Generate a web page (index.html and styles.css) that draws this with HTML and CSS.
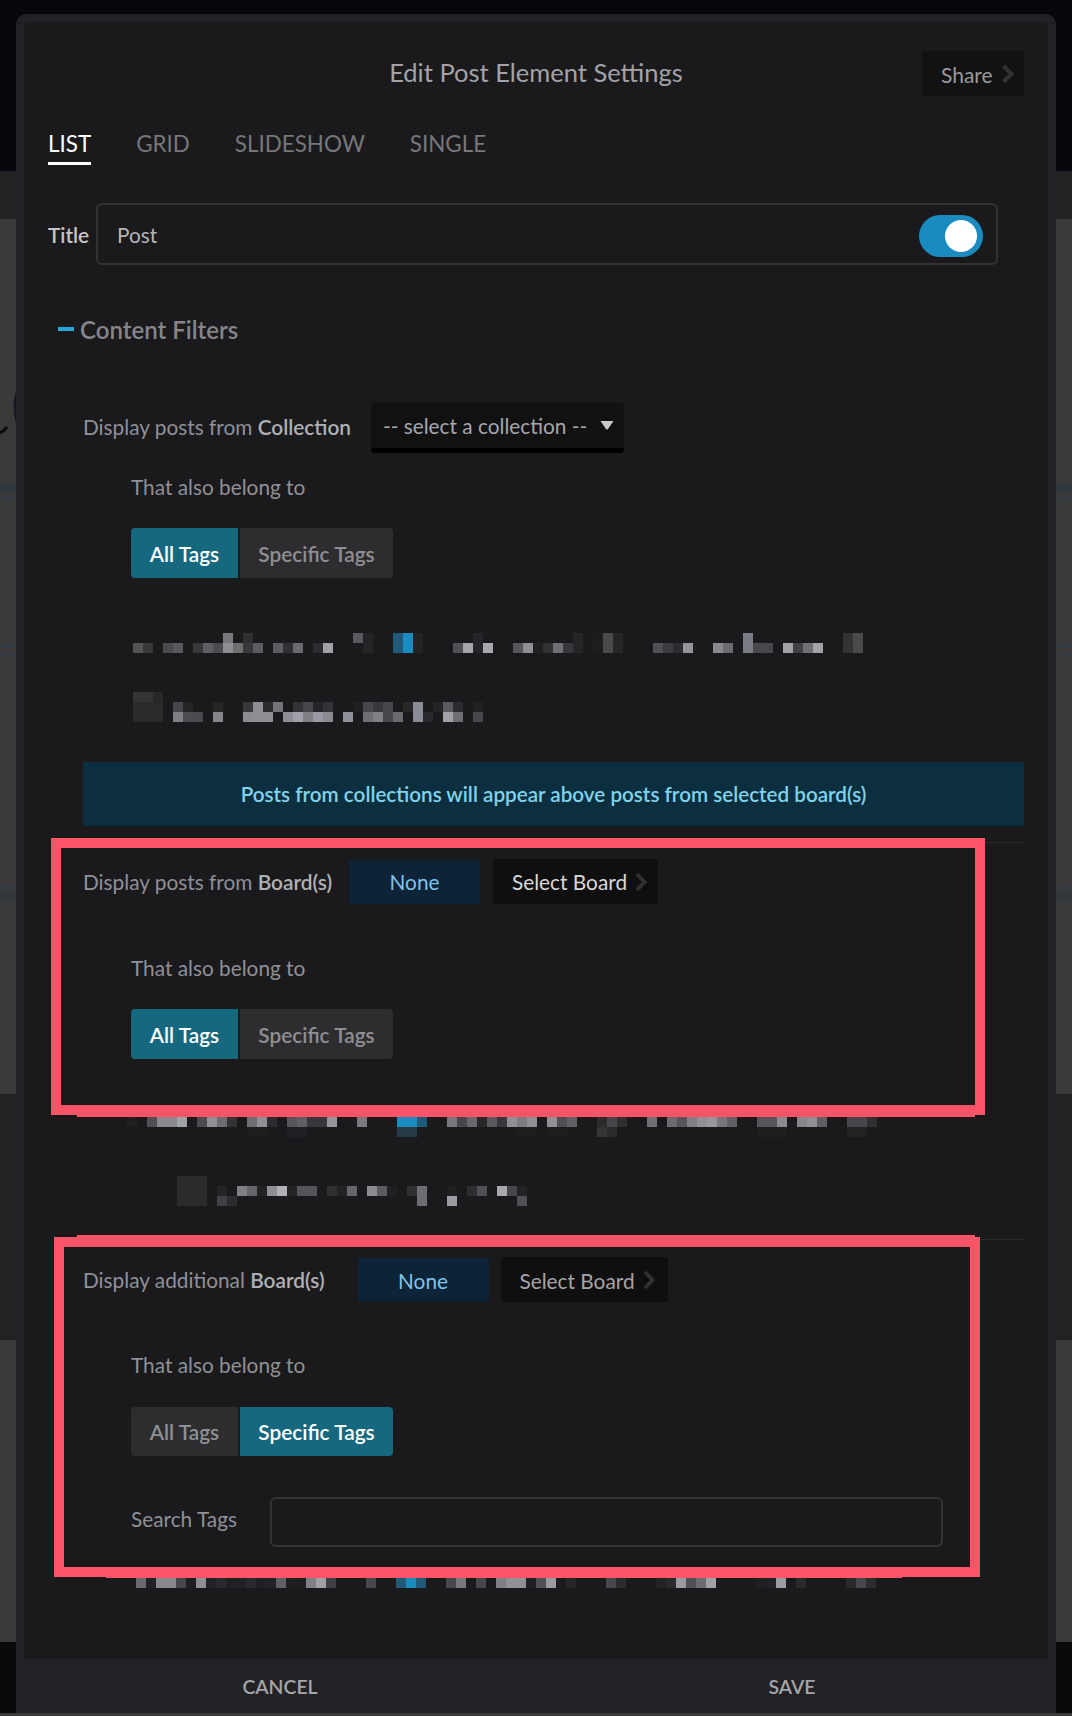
FILE: index.html
```html
<!DOCTYPE html>
<html lang="en">
<head>
<meta charset="utf-8">
<title>Edit Post Element Settings</title>
<link rel="stylesheet" href="styles.css">
</head>
<body>
<div class="backdrop">
  <div class="band band-top"></div>
  <div class="band band-mid"></div>
  <div class="band band-grey band-a">
    <i class="stripe stripe-1"></i><i class="dots dots-1"></i><i class="dots dots-2"></i><i class="dots dots-3"></i><i class="dots dots-4"></i><i class="stripe stripe-2"></i>
    <svg class="glyph" width="18" height="60" viewBox="0 0 18 60"><path d="M0 46 Q4 44 7 40" fill="none" stroke="#0c0c10" stroke-width="3"/><path d="M17 6 Q13 18 17 35" fill="none" stroke="#14181f" stroke-width="3"/></svg>
  </div>
  <div class="band band-mid band-b"></div>
  <div class="band band-grey band-c"></div>
  <div class="band band-black"></div>
  <div class="band band-grey band-d"></div>
</div>

<div class="modal">
  <div class="panel">
    <header class="head">
      <span></span>
      <h1 class="title">Edit Post Element Settings</h1>
      <button class="share">Share
        <svg class="chev" width="14" height="20" viewBox="0 0 14 20"><path d="M2.5 2 L10.5 10 L2.5 18" fill="none" stroke="#303032" stroke-width="4.2"/></svg>
      </button>
    </header>

    <nav class="tabs">
      <a class="tab tab-on">LIST</a><a class="tab">GRID</a><a class="tab">SLIDESHOW</a><a class="tab">SINGLE</a>
    </nav>

    <div class="title-row">
      <label class="title-label">Title</label>
      <div class="title-input">
        <span>Post</span>
        <span class="toggle"><i class="knob"></i></span>
      </div>
    </div>

    <h2 class="filters"><i class="dash"></i>Content Filters</h2>

    <div class="row row-collection">
      <span class="lbl lbl-raised">Display posts from <b>Collection</b></span>
      <div class="select">-- select a collection --
        <svg class="tri" width="14" height="9" viewBox="0 0 14 9"><path d="M0.5 0 H13.5 L8 8 Q7 9 6 8 Z" fill="#c9c9cb"/></svg>
      </div>
    </div>
    <p class="also also-first">That also belong to</p>
    <div class="seg"><span class="seg-btn seg-a seg-on">All Tags</span><span class="seg-btn seg-b">Specific Tags</span></div>

    <svg class="mosaic m1" width="750" height="20" viewBox="0 0 75 2" shape-rendering="crispEdges">
      <g transform="translate(0 1)"><rect x="0" fill="#555"/><rect x="1" fill="#3a3a3c"/><rect x="3" fill="#4a4a4d"/><rect x="4" fill="#58585c"/><rect x="6" fill="#38383b"/><rect x="7" fill="#5f5f63"/><rect x="8" fill="#4c4c50"/><rect x="9" fill="#8f8f93"/><rect x="10" fill="#6e6e70"/><rect x="11" fill="#38383b"/><rect x="12" fill="#5c5c60"/><rect x="14" fill="#5c5e62"/><rect x="15" fill="#303034"/><rect x="16" fill="#6a6a6e"/><rect x="18" fill="#2c2c30"/><rect x="19" fill="#a0a0a6"/><rect x="23" fill="#242427"/><rect x="26" fill="#205a78"/><rect x="27" fill="#1a8bbf"/><rect x="28" fill="#232326"/><rect x="32" fill="#505055"/><rect x="33" fill="#a5a5ac"/><rect x="34" fill="#26262a"/><rect x="35" fill="#a8a8ae"/><rect x="38" fill="#55555a"/><rect x="39" fill="#909094"/><rect x="40" fill="#202022"/><rect x="41" fill="#333335"/><rect x="42" fill="#6e7074"/><rect x="43" fill="#38383c"/><rect x="44" fill="#252527"/><rect x="46" fill="#1e1e20"/><rect x="47" fill="#4a4a4a"/><rect x="48" fill="#262628"/><rect x="52" fill="#505055"/><rect x="53" fill="#3c3c40"/><rect x="54" fill="#2b2c30"/><rect x="55" fill="#959599"/><rect x="58" fill="#8a8a8e"/><rect x="59" fill="#6c6c70"/><rect x="61" fill="#7a7c84"/><rect x="62" fill="#48484c"/><rect x="63" fill="#48484c"/><rect x="65" fill="#a0a0a6"/><rect x="66" fill="#404045"/><rect x="67" fill="#6f6f74"/><rect x="68" fill="#a0a3a8"/><rect x="71" fill="#333"/><rect x="72" fill="#4a4a4a"/></g>
      <g><rect x="9" fill="#77777c"/><rect x="11" fill="#303033"/><rect x="22" fill="#5a5a5e"/><rect x="23" fill="#242427"/><rect x="26" fill="#205a78"/><rect x="27" fill="#1a8bbf"/><rect x="28" fill="#232326"/><rect x="34" fill="#26262a"/><rect x="44" fill="#252527"/><rect x="46" fill="#1e1e20"/><rect x="47" fill="#4a4a4a"/><rect x="48" fill="#262628"/><rect x="61" fill="#7a7c84"/><rect x="71" fill="#333"/><rect x="72" fill="#4a4a4a"/></g>
    </svg>

    <svg class="mosaic m2" width="350" height="30" viewBox="0 0 35 3" shape-rendering="crispEdges">
      <g><rect x="0" fill="#343437"/><rect x="1" fill="#343437"/><rect x="2" fill="#28282b"/></g>
      <g transform="translate(0 1)"><rect x="0" fill="#2b2b2e"/><rect x="1" fill="#2b2b2e"/><rect x="2" fill="#2b2b2e"/><rect x="4" fill="#47474b"/><rect x="5" fill="#252527"/><rect x="8" fill="#252527"/><rect x="11" fill="#38383b"/><rect x="12" fill="#8f8f93"/><rect x="13" fill="#2c2c2f"/><rect x="14" fill="#727478"/><rect x="16" fill="#333336"/><rect x="17" fill="#47474b"/><rect x="18" fill="#242427"/><rect x="19" fill="#333338"/><rect x="22" fill="#202022"/><rect x="23" fill="#47474b"/><rect x="24" fill="#38383c"/><rect x="25" fill="#47474b"/><rect x="27" fill="#28282b"/><rect x="28" fill="#8a8c94"/><rect x="30" fill="#242427"/><rect x="31" fill="#5a5a5e"/><rect x="32" fill="#2c2c30"/><rect x="34" fill="#212123"/></g>
      <g transform="translate(0 2)"><rect x="0" fill="#2b2b2e"/><rect x="1" fill="#2b2b2e"/><rect x="2" fill="#2b2b2e"/><rect x="4" fill="#808084"/><rect x="5" fill="#4c4c50"/><rect x="6" fill="#4a4a4e"/><rect x="8" fill="#85858a"/><rect x="11" fill="#8c8c90"/><rect x="12" fill="#8f8f93"/><rect x="13" fill="#8f8f93"/><rect x="15" fill="#8e8e94"/><rect x="16" fill="#a0a0a8"/><rect x="17" fill="#808084"/><rect x="18" fill="#9a9aa2"/><rect x="19" fill="#8a8a90"/><rect x="21" fill="#8f9298"/><rect x="23" fill="#6f6f75"/><rect x="24" fill="#808086"/><rect x="25" fill="#47474b"/><rect x="26" fill="#6a6a6e"/><rect x="28" fill="#8a8c94"/><rect x="29" fill="#28282c"/><rect x="31" fill="#a0a0a8"/><rect x="32" fill="#6e6e72"/><rect x="34" fill="#47474b"/></g>
    </svg>

    <div class="notice">Posts from collections will appear above posts from selected board(s)</div>

    <hr class="rule rule-1">
    <div class="row row-boards">
      <span class="lbl">Display posts from <b>Board(s)</b></span>
      <span class="none none-1">None</span>
      <button class="pick pick-1">Select Board
        <svg class="chev" width="12" height="20" viewBox="0 0 12 20"><path d="M2 2 L9.5 10 L2 18" fill="none" stroke="#303032" stroke-width="4"/></svg>
      </button>
    </div>
    <p class="also also-board">That also belong to</p>
    <div class="seg"><span class="seg-btn seg-a seg-on">All Tags</span><span class="seg-btn seg-b">Specific Tags</span></div>

    <svg class="mosaic m3" width="750" height="20" viewBox="0 0 75 2" shape-rendering="crispEdges">
      <g><rect x="0" fill="#202022"/><rect x="2" fill="#505054"/><rect x="3" fill="#8a8a8e"/><rect x="4" fill="#8a8a8e"/><rect x="5" fill="#a0a3a8"/><rect x="7" fill="#4c4c50"/><rect x="8" fill="#8f9096"/><rect x="9" fill="#6e6e72"/><rect x="10" fill="#333336"/><rect x="12" fill="#6c6e72"/><rect x="13" fill="#8f9096"/><rect x="14" fill="#2c2c30"/><rect x="16" fill="#55555a"/><rect x="17" fill="#5f6064"/><rect x="18" fill="#38383c"/><rect x="19" fill="#38383c"/><rect x="20" fill="#95969c"/><rect x="23" fill="#7a7a7e"/><rect x="27" fill="#1a8bbf"/><rect x="28" fill="#1a8bbf"/><rect x="29" fill="#205a78"/><rect x="32" fill="#77777c"/><rect x="33" fill="#47474b"/><rect x="34" fill="#68686c"/><rect x="35" fill="#28282b"/><rect x="36" fill="#5a5a5e"/><rect x="37" fill="#38383c"/><rect x="38" fill="#8f9096"/><rect x="39" fill="#7c7c80"/><rect x="40" fill="#8f9096"/><rect x="42" fill="#909094"/><rect x="43" fill="#505054"/><rect x="44" fill="#5f6064"/><rect x="47" fill="#2c2c2e"/><rect x="48" fill="#47474b"/><rect x="49" fill="#303033"/><rect x="52" fill="#6e7076"/><rect x="54" fill="#6c6c70"/><rect x="55" fill="#555559"/><rect x="56" fill="#808084"/><rect x="57" fill="#909094"/><rect x="58" fill="#97979d"/><rect x="59" fill="#77777c"/><rect x="60" fill="#606064"/><rect x="63" fill="#55555a"/><rect x="64" fill="#55555a"/><rect x="65" fill="#8a8c92"/><rect x="67" fill="#85858a"/><rect x="68" fill="#8f9096"/><rect x="69" fill="#606064"/><rect x="72" fill="#47474b"/><rect x="73" fill="#47474b"/><rect x="74" fill="#303033"/></g>
      <g transform="translate(0 1)"><rect x="12" fill="#1e1e20"/><rect x="13" fill="#1e1e20"/><rect x="16" fill="#1f1f24"/><rect x="17" fill="#1f1f24"/><rect x="27" fill="#263a48"/><rect x="28" fill="#263a48"/><rect x="39" fill="#1e1e20"/><rect x="40" fill="#1e1e20"/><rect x="42" fill="#1e1e20"/><rect x="43" fill="#1e1e20"/><rect x="47" fill="#363638"/><rect x="48" fill="#2a2a2c"/><rect x="63" fill="#1f1f22"/><rect x="64" fill="#1f1f22"/><rect x="65" fill="#1f1f22"/><rect x="72" fill="#222224"/><rect x="73" fill="#222224"/></g>
    </svg>

    <svg class="mosaic m4" width="350" height="30" viewBox="0 0 35 3" shape-rendering="crispEdges">
      <g><rect x="0" fill="#2b2b2e"/><rect x="1" fill="#2b2b2e"/><rect x="2" fill="#2b2b2e"/></g>
      <g transform="translate(0 1)"><rect x="0" fill="#2b2b2e"/><rect x="1" fill="#2b2b2e"/><rect x="2" fill="#2b2b2e"/><rect x="4" fill="#242427"/><rect x="6" fill="#808084"/><rect x="7" fill="#66666a"/><rect x="8" fill="#232326"/><rect x="9" fill="#909094"/><rect x="10" fill="#b0b2b8"/><rect x="11" fill="#232326"/><rect x="12" fill="#555559"/><rect x="13" fill="#555559"/><rect x="15" fill="#303033"/><rect x="16" fill="#232326"/><rect x="17" fill="#66666a"/><rect x="19" fill="#8a8c92"/><rect x="20" fill="#5c5c60"/><rect x="21" fill="#202022"/><rect x="23" fill="#303033"/><rect x="24" fill="#6e6e72"/><rect x="27" fill="#1f1f21"/><rect x="29" fill="#2e2e30"/><rect x="30" fill="#505054"/><rect x="32" fill="#a8a8ae"/><rect x="33" fill="#47474b"/><rect x="34" fill="#232326"/></g>
      <g transform="translate(0 2)"><rect x="0" fill="#2b2b2e"/><rect x="1" fill="#2b2b2e"/><rect x="2" fill="#2b2b2e"/><rect x="4" fill="#404044"/><rect x="5" fill="#2c2c2f"/><rect x="24" fill="#6e6e72"/><rect x="27" fill="#9a9aa2"/><rect x="34" fill="#505054"/></g>
    </svg>

    <hr class="rule rule-2">
    <div class="row row-boards row-add">
      <span class="lbl lbl-add">Display additional <b>Board(s)</b></span>
      <span class="none none-2">None</span>
      <button class="pick pick-2">Select Board
        <svg class="chev" width="12" height="20" viewBox="0 0 12 20"><path d="M2 2 L9.5 10 L2 18" fill="none" stroke="#303032" stroke-width="4"/></svg>
      </button>
    </div>
    <p class="also also-board">That also belong to</p>
    <div class="seg seg-short"><span class="seg-btn seg-a">All Tags</span><span class="seg-btn seg-b seg-on">Specific Tags</span></div>
    <div class="search">
      <label class="lbl search-label">Search Tags</label>
      <div class="search-input"></div>
    </div>

    <svg class="mosaic m5" width="750" height="10" viewBox="0 0 75 1" shape-rendering="crispEdges">
      <rect x="0" fill="#6a6a6e"/><rect x="1" fill="#222226"/><rect x="2" fill="#88888c"/><rect x="3" fill="#88888c"/><rect x="4" fill="#47474b"/><rect x="5" fill="#1f1f21"/><rect x="6" fill="#8e8e94"/><rect x="7" fill="#222226"/><rect x="8" fill="#2a2a2e"/><rect x="9" fill="#202022"/><rect x="10" fill="#222226"/><rect x="11" fill="#2a2a2e"/><rect x="12" fill="#202024"/><rect x="13" fill="#222228"/><rect x="14" fill="#606064"/><rect x="15" fill="#1f1f21"/><rect x="16" fill="#1e1e20"/><rect x="17" fill="#808084"/><rect x="18" fill="#a0a0a8"/><rect x="19" fill="#404044"/><rect x="23" fill="#47474b"/><rect x="26" fill="#205a78"/><rect x="27" fill="#1a8bbf"/><rect x="28" fill="#205a78"/><rect x="31" fill="#47474b"/><rect x="32" fill="#77777c"/><rect x="34" fill="#47474b"/><rect x="36" fill="#808084"/><rect x="37" fill="#909096"/><rect x="38" fill="#909096"/><rect x="39" fill="#202024"/><rect x="40" fill="#505054"/><rect x="41" fill="#9a9aa2"/><rect x="43" fill="#262628"/><rect x="47" fill="#47474b"/><rect x="48" fill="#2c2c2e"/><rect x="52" fill="#232325"/><rect x="53" fill="#2a2a2c"/><rect x="54" fill="#9a9aa2"/><rect x="55" fill="#505055"/><rect x="56" fill="#6c6c70"/><rect x="57" fill="#a0a0a8"/><rect x="62" fill="#1f1f22"/><rect x="63" fill="#222226"/><rect x="64" fill="#9a9ca4"/><rect x="66" fill="#2a2a2c"/><rect x="71" fill="#2a2a2c"/><rect x="72" fill="#47474b"/><rect x="73" fill="#2c2c2e"/>
    </svg>
  </div>

  <footer class="foot">
    <span class="foot-btn">CANCEL</span>
    <span class="foot-btn">SAVE</span>
  </footer>
</div>

<div class="mark mark-1"></div>
<div class="mark-line mark-line-1"></div>
<div class="mark mark-2"></div>
<div class="mark-line mark-line-2"></div>
<div class="mark-line mark-line-3"></div>
</body>
</html>
```

FILE: styles.css
```css
* { box-sizing: border-box; }
html, body { margin: 0; padding: 0; }
body {
  position: relative;
  width: 1072px;
  height: 1716px;
  overflow: hidden;
  background: #05070c;
  font-family: Lato, "Open Sans", sans-serif;
  font-size: 20.8px;
  color: #8f9098;
}

/* page behind the dialog */
.backdrop { position: absolute; inset: 0; display: flex; flex-direction: column; }
.band { position: relative; flex: none; }
.band-top { height: 171px; background: #05070c; }
.band-mid { height: 48px; background: #222223; }
.band-grey { background: #3a3a3a; }
.band-a { height: 875px; }
.band-b { height: 246px; }
.band-c { height: 302px; }
.band-black { height: 71px; background: #0a0a0c; }
.band-d { height: 3px; }
.stripe { position: absolute; left: 0; right: 0; height: 9px; background: #32383c; }
.stripe-1 { top: 265px; }
.stripe-2 { top: 674px; }
.dots { position: absolute; left: 0; right: 0; height: 3px; background: repeating-linear-gradient(90deg, #2c3a4a 0 3px, transparent 3px 7px); }
.dots-1 { top: 278px; }
.dots-2 { top: 426px; }
.dots-3 { top: 435px; }
.dots-4 { top: 667px; }
.glyph { position: absolute; left: 0; top: 168px; }

/* dialog */
.modal {
  position: relative;
  margin: 14px 16px 0;
  height: 1699px;
  border-radius: 10px 10px 0 0;
  background: #222226;
  display: flex;
  flex-direction: column;
  overflow: hidden;
}
.panel {
  height: 1637px;
  margin: 8px 8px 0;
  background: #1a1a1c;
  overflow: hidden;
  flex: none;
  border-radius: 3px 3px 0 0;
}
.head {
  display: grid;
  grid-template-columns: 1fr auto 1fr;
  align-items: center;
  height: 45px;
  margin-top: 29px;
}
.title { margin: 0 0 3px; font-size: 25.5px; font-weight: 400; color: #a3a3a8; }
.share {
  justify-self: end;
  width: 102px;
  height: 45px;
  margin-right: 24px;
  padding: 1px 0 0 19px;
  display: flex;
  align-items: center;
  gap: 8px;
  border: 0;
  border-radius: 4px;
  background: #121213;
  color: #9a9a9e;
  font: inherit;
  font-size: 21px;
}
.tabs { display: flex; gap: 45px; margin: 34px 0 0 24px; }
.tab {
  height: 35px;
  line-height: 28px;
  font-size: 22.4px;
  color: #76767b;
}
.tab-on { color: #fff; border-bottom: 3px solid #fff; }

.title-row { display: flex; align-items: center; gap: 8px; margin: 38px 0 0 24px; }
.title-label { font-weight: 600; color: #c6c6c8; width: 40px; }
.title-input {
  width: 902px;
  height: 62px;
  border: 2px solid #333336;
  border-radius: 6px;
  display: flex;
  align-items: center;
  justify-content: space-between;
  padding: 0 13px 0 19px;
  color: #b4b4b8;
}
.toggle { display: block; width: 64px; height: 42px; margin-top: 4px; border-radius: 21px; background: #1a8bbf; position: relative; }
.knob { position: absolute; right: 6px; top: 5px; width: 32px; height: 32px; border-radius: 50%; background: #fff; }

.filters {
  display: flex;
  align-items: center;
  margin: 49px 0 0 34px;
  height: 30px;
  font-size: 24px;
  font-weight: 600;
  color: #85858a;
}
.dash { width: 16px; height: 4px; background: #27a6dd; margin-right: 6px; }

.row { display: flex; align-items: center; margin-left: 59px; }
.row-collection { margin-top: 59px; gap: 20px; }
.row-boards { margin-top: 16px; height: 45px; }
.row-add { margin-top: 17px; margin-bottom: -1px; }
.row-add .none, .row-add .pick { padding-top: 1px; }
.row-add .none { height: 43px; }
.lbl { color: #8f9098; }
.lbl-raised { margin-bottom: 4px; }
.lbl b { font-weight: 600; color: #b0b0b3; }
.select {
  position: relative;
  width: 253px;
  height: 50px;
  padding: 0 10px 0 12px;
  display: flex;
  align-items: center;
  justify-content: space-between;
  background: #111112;
  border-bottom: 5px solid #000;
  border-radius: 4px;
  color: #a6a6aa;
}
.also { margin: 0 0 0 107px; height: 30px; line-height: 30px; color: #8f9098; }
.also-first { margin-top: 19px; }
.also-board { margin-top: 49px; }

.seg { display: flex; gap: 2px; margin: 26px 0 0 107px; height: 50px; }
.seg-short { height: 49px; margin-top: 27px; }
.seg-btn {
  display: flex;
  align-items: center;
  justify-content: center;
  background: #2d2d30;
  color: #8f8f93;
  font-weight: 600;
}
.seg-a { width: 107px; border-radius: 4px 0 0 4px; }
.seg-b { width: 153px; border-radius: 0 4px 4px 0; }
.seg-on { background: #15687e; color: #fff; }

.mosaic { display: block; }
.mosaic rect { width: 1px; height: 1px; }
.m1 { margin: 55px 0 0 109.33px; }
.m2 { margin: 39px 0 0 109.33px; }
.m3 { margin: 58px 0 0 102.67px; }
.m4 { margin: 39px 0 0 152.67px; }
.m5 { margin: 31px 0 0 112px; }

.notice {
  margin: 40px 0 0 59px;
  width: 941px;
  height: 64px;
  display: flex;
  align-items: center;
  justify-content: center;
  background: #0c2f3f;
  color: #7fd3ec;
  font-size: 20.65px;
  font-weight: 600;
}
.rule { margin: 0 0 0 59px; width: 941px; height: 1px; border: 0; border-top: 1px dotted #3a3a3d; }
.rule-1 { margin-top: 16px; }
.rule-2 { margin-top: 33px; }

.none {
  flex: none;
  width: 131px;
  height: 44px;
  display: flex;
  align-items: center;
  justify-content: center;
  background: #0c2338;
  color: #7ec4e8;
}
.none-1 { margin-left: 17px; }
.none-2 { margin-left: 33px; }
.pick {
  flex: none;
  height: 45px;
  padding: 0 0 0 19px;
  display: flex;
  align-items: center;
  gap: 8px;
  border: 0;
  border-radius: 4px;
  background: #0f0f10;
  font: inherit;
}
.pick-1 { width: 165px; margin-left: 13px; color: #d8d8da; }
.pick-2 { width: 167px; margin-left: 12px; color: #a4a4a8; padding-left: 19px; }

.search { display: flex; align-items: center; margin: 41px 0 0 107px; }
.search-label { width: 138.5px; margin-top: -8px; }
.search-input { width: 673px; height: 50px; border: 2px solid #333336; border-radius: 6px; }

.foot { display: grid; grid-template-columns: 1fr 1fr; margin: 0 8px; height: 54px; }
.foot-btn { display: flex; align-items: center; justify-content: center; font-size: 19.4px; font-weight: 600; color: #a4a4a8; }

/* annotation rectangles drawn over the screenshot */
.mark { position: absolute; border: 10px solid #fb5468; }
.mark-1 { left: 51px; top: 838px; width: 934px; height: 277px; }
.mark-2 { left: 54px; top: 1237px; width: 926px; height: 340px; }
.mark-line { position: absolute; height: 2px; background: #fb5468; }
.mark-line-1 { left: 77px; top: 1115px; width: 898px; }
.mark-line-2 { left: 77px; top: 1235px; width: 898px; }
.mark-line-3 { left: 106px; top: 1577px; width: 796px; height: 1px; }
```
